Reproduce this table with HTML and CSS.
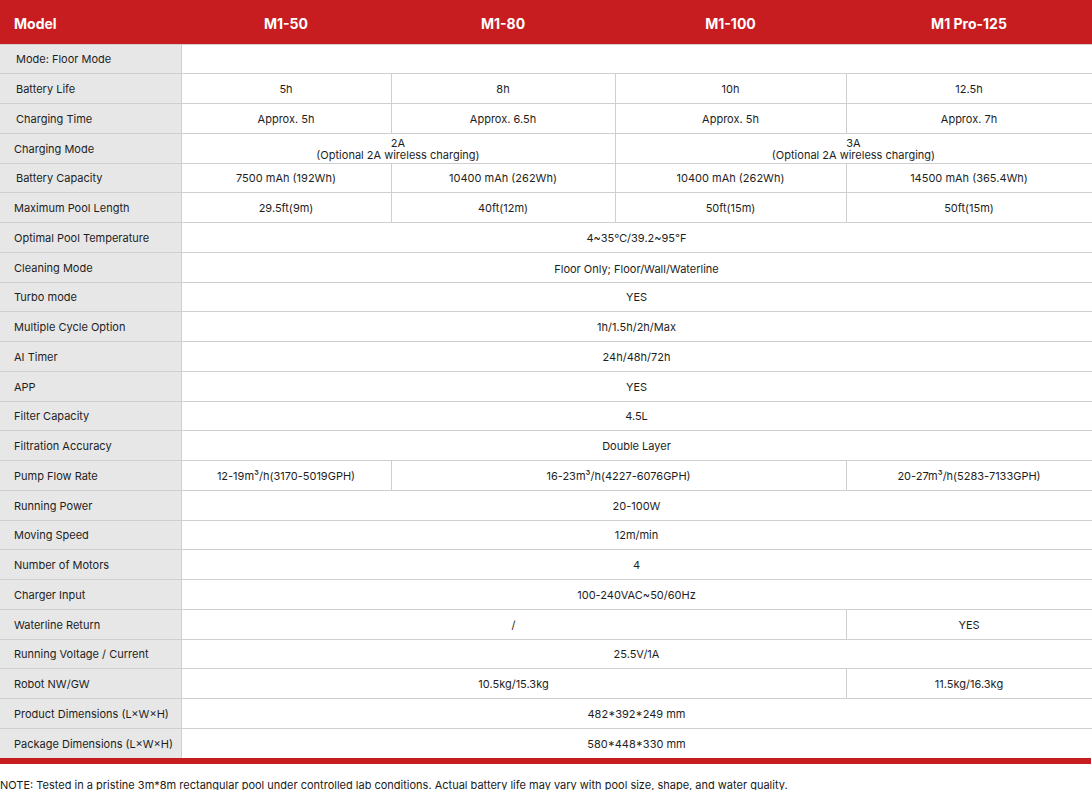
FILE: index.html
```html
<!DOCTYPE html>
<html lang="en">
<head>
<meta charset="utf-8">
<title>Specifications</title>
<link rel="stylesheet" href="styles.css">
</head>
<body>
<table class="spec">
  <colgroup>
    <col class="c-label"><col class="c-1"><col class="c-2"><col class="c-3"><col class="c-4">
  </colgroup>
  <thead>
    <tr class="head">
      <th class="h-label">Model</th>
      <th>M1-50</th>
      <th>M1-80</th>
      <th>M1-100</th>
      <th>M1 Pro-125</th>
    </tr>
  </thead>
  <tbody>
    <tr><td class="label indent">Mode: Floor Mode</td><td colspan="4"></td></tr>
    <tr><td class="label indent">Battery Life</td><td>5h</td><td>8h</td><td>10h</td><td>12.5h</td></tr>
    <tr><td class="label indent">Charging Time</td><td>Approx. 5h</td><td>Approx. 6.5h</td><td>Approx. 5h</td><td>Approx. 7h</td></tr>
    <tr><td class="label">Charging Mode</td><td colspan="2" class="two">2A<br>(Optional 2A wireless charging)</td><td colspan="2" class="two">3A<br>(Optional 2A wireless charging)</td></tr>
    <tr><td class="label indent">Battery Capacity</td><td>7500 mAh (192Wh)</td><td>10400 mAh (262Wh)</td><td>10400 mAh (262Wh)</td><td>14500 mAh (365.4Wh)</td></tr>
    <tr><td class="label">Maximum Pool Length</td><td>29.5ft(9m)</td><td>40ft(12m)</td><td>50ft(15m)</td><td>50ft(15m)</td></tr>
    <tr><td class="label">Optimal Pool Temperature</td><td colspan="4">4~35℃/39.2~95℉</td></tr>
    <tr><td class="label">Cleaning Mode</td><td colspan="4" class="low">Floor Only; Floor/Wall/Waterline</td></tr>
    <tr><td class="label">Turbo mode</td><td colspan="4">YES</td></tr>
    <tr><td class="label">Multiple Cycle Option</td><td colspan="4">1h/1.5h/2h/Max</td></tr>
    <tr><td class="label">AI Timer</td><td colspan="4">24h/48h/72h</td></tr>
    <tr><td class="label">APP</td><td colspan="4">YES</td></tr>
    <tr><td class="label">Filter Capacity</td><td colspan="4">4.5L</td></tr>
    <tr><td class="label">Filtration Accuracy</td><td colspan="4">Double Layer</td></tr>
    <tr><td class="label">Pump Flow Rate</td><td>12-19m³/h(3170-5019GPH)</td><td colspan="2">16-23m³/h(4227-6076GPH)</td><td>20-27m³/h(5283-7133GPH)</td></tr>
    <tr><td class="label">Running Power</td><td colspan="4">20-100W</td></tr>
    <tr><td class="label">Moving Speed</td><td colspan="4">12m/min</td></tr>
    <tr><td class="label">Number of Motors</td><td colspan="4">4</td></tr>
    <tr><td class="label">Charger Input</td><td colspan="4">100-240VAC~50/60Hz</td></tr>
    <tr><td class="label">Waterline Return</td><td colspan="3">/</td><td>YES</td></tr>
    <tr><td class="label">Running Voltage / Current</td><td colspan="4">25.5V/1A</td></tr>
    <tr><td class="label">Robot NW/GW</td><td colspan="3">10.5kg/15.3kg</td><td>11.5kg/16.3kg</td></tr>
    <tr><td class="label">Product Dimensions (L×W×H)</td><td colspan="4">482*392*249 mm</td></tr>
    <tr><td class="label">Package Dimensions (L×W×H)</td><td colspan="4">580*448*330 mm</td></tr>
  </tbody>
</table>
<div class="bar"></div>
<p class="note">NOTE: Tested in a pristine 3m*8m rectangular pool under controlled lab conditions. Actual battery life may vary with pool size, shape, and water quality.</p>
</body>
</html>
```
FILE: styles.css
```css
html, body {
  margin: 0;
  padding: 0;
  background: #ffffff;
}
body {
  font-family: Inter, "Liberation Sans", Arial, sans-serif;
  color: #222222;
  width: 1092px;
}
.spec {
  width: 1092px;
  border-collapse: collapse;
  table-layout: fixed;
}
.c-label { width: 181px; }
.c-1 { width: 210px; }
.c-2 { width: 224px; }
.c-3 { width: 231px; }
.c-4 { width: 246px; }

.head {
  height: 44px;
  background: #c81d20;
}
.head th {
  color: #ffffff;
  font-size: 14px;
  font-weight: 700;
  text-align: center;
  padding: 3px 0 0 0;
  border: none;
}
.head .h-label {
  text-align: left;
  padding-left: 14px;
}
.spec tbody tr {
  height: 29.75px;
}
.spec td {
  border: 1px solid #cfcfcf;
  font-size: 11px;
  text-align: center;
  padding: 2px 4px 0 4px;
  line-height: 13px;
  color: #1e1e1e;
}
.spec td:first-child {
  border-left: none;
}
.spec td.label {
  background: #e7e7e7;
  text-align: left;
  padding-left: 14px;
}
.spec td.label.indent {
  padding-left: 16px;
}
.spec td.two {
  line-height: 12px;
  padding-top: 1px;
}
.spec td.low {
  padding-top: 4px;
}
.spec tbody tr:last-child td {
  border-bottom: none;
}
.bar {
  height: 6px;
  background: #c81d20;
  width: 1091px;
}
.note {
  margin: 14px 0 0 0;
  font-size: 11px;
  line-height: 15px;
  color: #1a1a1a;
}
```
